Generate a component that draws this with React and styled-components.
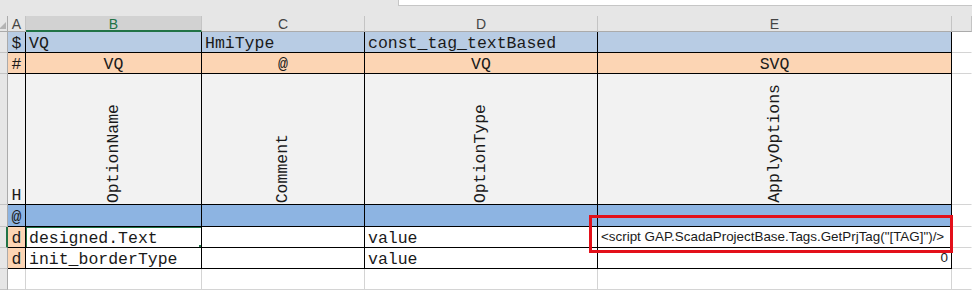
import React from 'react';
import styled, { createGlobalStyle, css } from 'styled-components';

const GlobalStyle = createGlobalStyle`
  html, body {
    margin: 0;
    padding: 0;
    background: #ffffff;
  }
  body {
    width: 972px;
    height: 290px;
    overflow: hidden;
  }
`;

const GRID = '#d4d4d4';
const EDGE = '#000000';
const HEAD = '#e6e6e6';
const GREEN = '#217346';

const Page = styled.div`
  width: 972px;
  height: 290px;
  display: flex;
  flex-direction: column;
  background: #ffffff;
  overflow: hidden;
`;

const TopBar = styled.div`
  height: 16px;
  flex: none;
  display: flex;
  background: ${HEAD};
  padding-left: 398px;
`;

const FormulaBox = styled.div`
  flex: 1;
  height: 5px;
  background: #ffffff;
  border-left: 1px solid #c6c6c6;
  border-bottom: 1px solid #c6c6c6;
`;

const Sheet = styled.div`
  position: relative;
  display: grid;
  grid-template-columns: 8px 18px 176px 163px 233px 354px 1fr;
  grid-template-rows: 16px 21px 21px 131px 22px 21px 21px 21px;
`;

const Corner = styled.div`
  background: ${HEAD};
  border-right: 1px solid #ababab;
  border-bottom: 1px solid #ababab;
  position: relative;

  &::after {
    content: '';
    position: absolute;
    right: 1px;
    bottom: 2px;
    width: 0;
    height: 0;
    border-left: 7px solid transparent;
    border-bottom: 7px solid #b4b4b4;
  }
`;

const ColHead = styled.div`
  background: ${(p) => (p.$active ? '#d2d2d2' : HEAD)};
  color: ${(p) => (p.$active ? GREEN : '#444444')};
  border-right: 1px solid #c4c4c4;
  border-bottom: ${(p) => (p.$active ? `2px solid ${GREEN}` : '1px solid #ababab')};
  font-family: 'Liberation Sans', Arial, sans-serif;
  font-size: 14px;
  display: flex;
  align-items: center;
  justify-content: center;
  line-height: 1;
  padding-top: 1px;
`;

const RowHead = styled.div`
  background: ${HEAD};
  border-bottom: 1px solid #c4c4c4;
  border-right: ${(p) => (p.$active ? `2px solid ${GREEN}` : '1px solid #ababab')};
`;

const Cell = styled.div`
  position: relative;
  background: ${(p) => p.$bg || '#ffffff'};
  border-right: 1px solid ${(p) => p.$right || EDGE};
  border-bottom: 1px solid ${(p) => p.$bottom || EDGE};
  display: flex;
  align-items: flex-end;
  justify-content: ${(p) =>
    p.$align === 'center' ? 'center' : p.$align === 'right' ? 'flex-end' : 'flex-start'};
  padding: 0 3px;
  overflow: hidden;
  white-space: nowrap;
  color: #1a1a1a;
  font-family: ${(p) =>
    p.$sans ? "'Liberation Sans', Arial, sans-serif" : "'Liberation Mono', 'Courier New', monospace"};
  font-size: ${(p) => (p.$sans ? '13.4px' : '16.5px')};
  line-height: 16px;
  box-sizing: border-box;

  ${(p) =>
    p.$sans &&
    css`
      padding-bottom: 2px;
    `}

  ${(p) =>
    p.$vertical &&
    css`
      padding-bottom: 1px;
    `}

  ${(p) =>
    p.$selected &&
    css`
      &::after {
        content: '';
        position: absolute;
        left: -1px;
        top: -1px;
        right: -2px;
        bottom: -2px;
        border: 2px solid ${GREEN};
        pointer-events: none;
      }
      &::before {
        content: '';
        position: absolute;
        right: -3px;
        bottom: -3px;
        width: 5px;
        height: 5px;
        background: ${GREEN};
        z-index: 2;
      }
    `}
`;

const VerticalText = styled.span`
  writing-mode: vertical-rl;
  transform: rotate(180deg);
  line-height: 18px;
`;

const Highlight = styled.div`
  position: absolute;
  left: 589px;
  top: 199px;
  width: 364px;
  height: 38px;
  box-sizing: border-box;
  border: 3px solid #e3101a;
  pointer-events: none;
  z-index: 3;
`;

const columns = ['A', 'B', 'C', 'D', 'E', ''];

const rows = [
  { key: '$', bg: '#b8cce4', values: ['VQ', 'HmiType', 'const_tag_textBased', ''] },
  { key: '#', bg: '#fcd5b4', align: 'center', values: ['VQ', '@', 'VQ', 'SVQ'] },
  {
    key: 'H',
    bg: '#f2f2f2',
    vertical: true,
    values: ['OptionName', 'Comment', 'OptionType', 'ApplyOptions'],
  },
  { key: '@', bg: '#8db4e2', values: ['', '', '', ''] },
  {
    key: 'd',
    markBg: '#fcd5b4',
    selectedRow: true,
    values: ['designed.Text', '', 'value', '<script GAP.ScadaProjectBase.Tags.GetPrjTag("[TAG]")/>'],
    sansLast: true,
  },
  {
    key: 'd',
    markBg: '#fcd5b4',
    values: ['init_borderType', '', 'value', '0'],
    sansLast: true,
    rightLast: true,
  },
];

function DataRow({ row }) {
  const markBg = row.markBg || row.bg;
  return (
    <>
      <RowHead $active={row.selectedRow} />
      <Cell $bg={markBg} $align="center" $right={EDGE}>
        {row.key}
      </Cell>
      {row.values.map((v, i) => {
        const last = i === row.values.length - 1;
        return (
          <Cell
            key={i}
            $bg={row.bg}
            $align={row.vertical ? 'center' : last && row.rightLast ? 'right' : row.align}
            $sans={last && row.sansLast}
            $vertical={row.vertical}
            $selected={row.selectedRow && i === 0}
          >
            {row.vertical ? <VerticalText>{v}</VerticalText> : v}
          </Cell>
        );
      })}
      <Cell $right="transparent" $bottom={GRID} />
    </>
  );
}

export default function App() {
  return (
    <Page>
      <GlobalStyle />
      <TopBar>
        <FormulaBox />
      </TopBar>
      <Sheet>
        <Corner />
        {columns.map((c, i) => (
          <ColHead key={i} $active={c === 'B'}>
            {c}
          </ColHead>
        ))}
        {rows.map((r, i) => (
          <DataRow key={i} row={r} />
        ))}
        <RowHead />
        <Cell $right={GRID} $bottom={GRID} />
        <Cell $right={GRID} $bottom={GRID} />
        <Cell $right={GRID} $bottom={GRID} />
        <Cell $right={GRID} $bottom={GRID} />
        <Cell $right={GRID} $bottom={GRID} />
        <Cell $right="transparent" $bottom={GRID} />
        <Highlight />
      </Sheet>
    </Page>
  );
}
